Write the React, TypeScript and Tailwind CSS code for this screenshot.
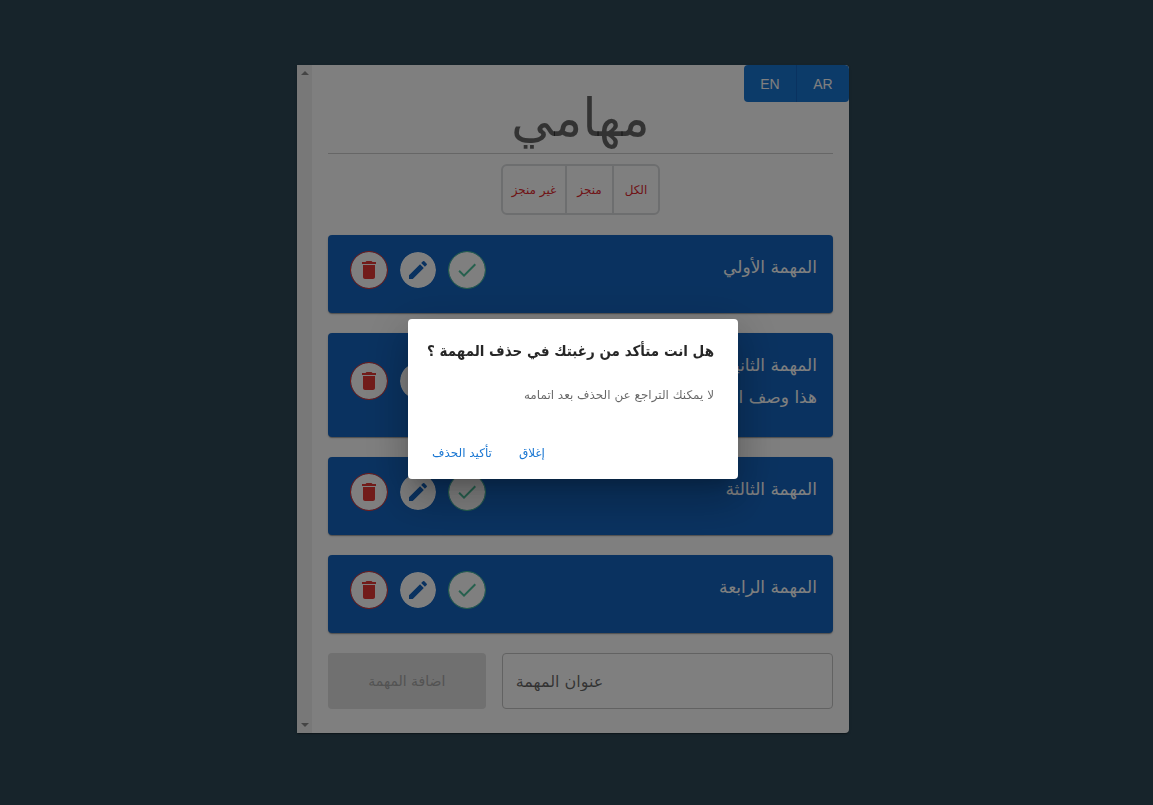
type Task = { id: number; title: string; details?: string };

const tasks: Task[] = [
  { id: 1, title: "المهمة الأولي" },
  { id: 2, title: "المهمة الثانية", details: "هذا وصف المهمة" },
  { id: 3, title: "المهمة الثالثة" },
  { id: 4, title: "المهمة الرابعة" },
];

const filters = [
  { name: "الكل", width: "w-[46px]" },
  { name: "منجز", width: "w-[47px]" },
  { name: "غير منجز", width: "w-[62px]" },
];

const icons = {
  check: "M9 16.17 4.83 12l-1.42 1.41L9 19 21 7l-1.41-1.41z",
  edit: "M3 17.25V21h3.75L17.81 9.94l-3.75-3.75zM20.71 7.04c.39-.39.39-1.02 0-1.41l-2.34-2.34a.9959.9959 0 0 0-1.41 0l-1.83 1.83 3.75 3.75z",
  trash: "M6 19c0 1.1.9 2 2 2h8c1.1 0 2-.9 2-2V7H6zM19 4h-3.5l-1-1h-5l-1 1H5v2h14z",
};

function RoundButton({ label, tone, path }: { label: string; tone: string; path: string }) {
  return (
    <button
      type="button"
      aria-label={label}
      className={`flex size-[38px] items-center justify-center rounded-full border bg-white bg-clip-padding ${tone}`}
    >
      <svg className="size-6" viewBox="0 0 24 24" fill="currentColor" aria-hidden="true">
        <path d={path} />
      </svg>
    </button>
  );
}

function TaskCard({ task }: { task: Task }) {
  return (
    <li className="flex items-center justify-between rounded bg-[#1565c0] pt-4 pr-4 pb-6 pl-[22px] text-white shadow-[0_2px_1px_-1px_rgba(0,0,0,0.2),0_1px_1px_rgba(0,0,0,0.14),0_1px_3px_rgba(0,0,0,0.12)]">
      <div className="self-start text-[17px] leading-8">
        <h2>{task.title}</h2>
        {task.details && <p>{task.details}</p>}
      </div>
      <div className="flex gap-[11px]">
        <RoundButton label="إنجاز" tone="border-[#4dc09c] text-[#4dc09c]" path={icons.check} />
        <RoundButton label="تعديل" tone="border-[#1565c0] text-[#1565c0]" path={icons.edit} />
        <RoundButton label="حذف" tone="border-[#e53935] text-[#e53935]" path={icons.trash} />
      </div>
    </li>
  );
}

function ScrollTrack() {
  return (
    <div className="flex w-[15px] shrink-0 flex-col items-center justify-between bg-[#f0f0f0] py-[6px] text-[#8b8b8b]">
      <svg width="8" height="4" viewBox="0 0 8 4" fill="currentColor">
        <path d="M0 4 4 0l4 4z" />
      </svg>
      <svg width="8" height="4" viewBox="0 0 8 4" fill="currentColor">
        <path d="M0 0h8L4 4z" />
      </svg>
    </div>
  );
}

function DeleteDialog() {
  return (
    <div className="fixed inset-0 flex items-center justify-center bg-black/50 pr-[7px] pb-[7px]">
      <div
        role="dialog"
        aria-modal="true"
        aria-labelledby="dialog-title"
        aria-describedby="dialog-text"
        className="w-[330px] rounded bg-white shadow-[0_11px_15px_-7px_rgba(0,0,0,0.2),0_24px_38px_3px_rgba(0,0,0,0.14),0_9px_46px_8px_rgba(0,0,0,0.12)]"
      >
        <h2
          id="dialog-title"
          className="px-6 py-4 font-['DejaVu_Sans_Condensed','DejaVu_Sans',sans-serif] text-[15px] leading-8 font-bold whitespace-nowrap text-black/85"
        >
          هل انت متأكد من رغبتك في حذف المهمة ؟
        </h2>
        <p id="dialog-text" className="px-6 pb-5 text-xs leading-6 text-black/60">
          لا يمكنك التراجع عن الحذف بعد اتمامه
        </p>
        <div className="flex justify-end py-2 pl-4 text-xs text-[#1976d2]">
          <button type="button" className="h-9 min-w-16 px-2">
            إغلاق
          </button>
          <button type="button" className="h-9 min-w-16 px-2">
            تأكيد الحذف
          </button>
        </div>
      </div>
    </div>
  );
}

export default function App() {
  return (
    <div
      dir="rtl"
      className="flex min-h-screen items-center justify-center bg-[#2e4856] pr-[7px] pb-[7px] font-['DejaVu_Sans',sans-serif]"
    >
      <main className="flex w-full max-w-[552px] overflow-hidden rounded-r bg-white shadow-[0_2px_1px_-1px_rgba(0,0,0,0.2),0_1px_1px_rgba(0,0,0,0.14),0_1px_3px_rgba(0,0,0,0.12)]">
        <div className="min-w-0 grow">
          <div className="flex font-['Liberation_Sans',Arial,sans-serif] text-sm text-white">
            <div className="flex rounded bg-[#1976d2]">
              <button type="button" className="h-[37px] w-[53px] border-l border-[#1565c0]">
                AR
              </button>
              <button type="button" className="h-[37px] w-[52px]">
                EN
              </button>
            </div>
          </div>
          <div className="px-4 pb-6">
            <h1 className="-mt-4 h-[68px] border-b border-black/20 text-center text-[52px] leading-[64px] text-black/60">
              مهامي
            </h1>
            <div className="mt-[10px] flex justify-center">
              <div className="flex divide-x-2 divide-[#dadcde] rounded-md border-2 border-[#dadcde] text-xs text-[#e0282e]">
                {filters.map(({ name, width }) => (
                  <button key={name} type="button" className={`h-[47px] ${width}`}>
                    {name}
                  </button>
                ))}
              </div>
            </div>
            <ul className="mt-5 flex flex-col gap-5">
              {tasks.map((task) => (
                <TaskCard key={task.id} task={task} />
              ))}
            </ul>
            <form className="mt-5 grid grid-cols-3 gap-4">
              <input
                type="text"
                aria-label="عنوان المهمة"
                placeholder="عنوان المهمة"
                className="col-span-2 h-14 min-w-0 rounded border border-[#c4c4c4] px-[13px] text-left text-base placeholder:text-black/60"
              />
              <button type="submit" disabled className="h-14 rounded bg-[#e0e0e0] text-sm text-[#a6a6a6]">
                اضافة المهمة
              </button>
            </form>
          </div>
        </div>
        <ScrollTrack />
      </main>
      <DeleteDialog />
    </div>
  );
}
